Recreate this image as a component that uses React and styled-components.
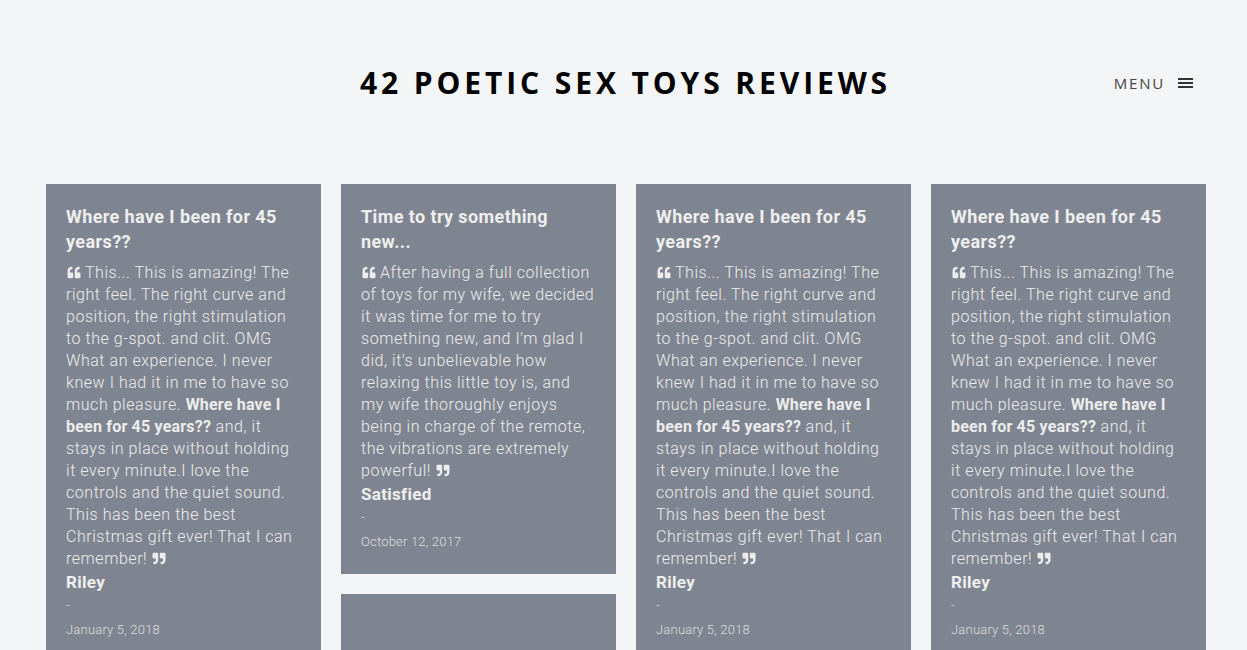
import React from 'react'
import styled, { createGlobalStyle } from 'styled-components'
import { FaQuoteLeft, FaQuoteRight } from 'react-icons/fa'

const riley = {
  title: 'Where have I been for 45 years??',
  before: 'This... This is amazing! The right feel. The right curve and position, the right stimulation to the g-spot. and clit. OMG What an experience. I never knew I had it in me to have so much pleasure. ',
  strong: 'Where have I been for 45 years??',
  after: ' and, it stays in place without holding it every minute.I love the controls and the quiet sound. This has been the best Christmas gift ever! That I can remember!',
  author: 'Riley',
  date: 'January 5, 2018'
}

const reviews = [
  [riley],
  [
    {
      title: 'Time to try something new...',
      before: "After having a full collection of toys for my wife, we decided it was time for me to try something new, and I'm glad I did, it's unbelievable how relaxing this little toy is, and my wife thoroughly enjoys being in charge of the remote, the vibrations are extremely powerful!",
      author: 'Satisfied',
      date: 'October 12, 2017'
    },
    { empty: true }
  ],
  [riley],
  [riley]
]

export default function App() {
  return (
    <>
      <GlobalStyle />
      <Page>
        <Header>
          <SiteTitle>42 Poetic Sex Toys Reviews</SiteTitle>
          <MenuToggle>
            <span>Menu</span>
            <svg width="15" height="12" viewBox="0 0 15 12">
              <rect x="0" y="1" width="15" height="2" fill="#333" />
              <rect x="0" y="5" width="15" height="2" fill="#333" />
              <rect x="0" y="9" width="15" height="2" fill="#333" />
            </svg>
          </MenuToggle>
        </Header>

        <Grid>
          {reviews.map((col, i) => (
            <Column key={i}>
              {col.map((r, j) =>
                r.empty ? (
                  <Card key={j} $empty />
                ) : (
                  <Card key={j}>
                    <CardTitle>{r.title}</CardTitle>
                    <Quote>
                      <FaQuoteLeft className="q" />
                      {r.before}
                      {r.strong && <strong>{r.strong}</strong>}
                      {r.after}
                      <FaQuoteRight className="q right" />
                    </Quote>
                    <Author>{r.author}</Author>
                    <Dash>-</Dash>
                    <DateLine>{r.date}</DateLine>
                  </Card>
                )
              )}
            </Column>
          ))}
        </Grid>
      </Page>
    </>
  )
}

// STYLES
const GlobalStyle = createGlobalStyle`
  html, body {
    margin: 0;
    padding: 0;
    background: #f4f5f7;
  }
  body {
    font-family: Roboto, "Liberation Sans", sans-serif;
    overflow: hidden;
  }
`

const Page = styled.div`
  height: 650px;
  overflow: hidden;
`

const Header = styled.header`
  position: relative;
  height: 184px;
  display: flex;
  justify-content: center;
  padding-top: 64px;
  box-sizing: border-box;
`

const SiteTitle = styled.h1`
  margin: 0;
  font-family: "Open Sans", sans-serif;
  font-weight: 700;
  font-size: 30px;
  line-height: 38px;
  letter-spacing: 3.9px;
  text-transform: uppercase;
  color: #000;
  height: 38px;
  padding-left: 4px;
`

const MenuToggle = styled.div`
  position: absolute;
  right: 54px;
  top: 73px;
  display: flex;
  align-items: center;
  gap: 13px;
  font-family: "Open Sans", sans-serif;
  font-size: 15px;
  letter-spacing: 1.8px;
  text-transform: uppercase;
  color: #444;

  svg { display: block; }
`

const Grid = styled.div`
  display: flex;
  gap: 20px;
  padding-left: 46px;
  align-items: flex-start;
`

const Column = styled.div`
  width: 275px;
  display: flex;
  flex-direction: column;
  gap: 20px;
`

const Card = styled.article`
  background: #7f8590;
  padding: 20px 20px 20px;
  box-sizing: border-box;
  color: #ebebeb;
  min-height: ${p => (p.$empty ? '80px' : 'auto')};
`

const CardTitle = styled.h2`
  margin: 0 0 8px;
  font-family: Roboto, sans-serif;
  font-weight: 700;
  font-size: 18px;
  line-height: 25px;
  letter-spacing: 0.4px;
  color: #eeeeee;
`

const Quote = styled.p`
  margin: 0;
  font-family: Roboto, sans-serif;
  font-weight: 300;
  font-size: 16px;
  line-height: 22px;
  letter-spacing: 0.55px;
  color: #ececec;

  strong {
    font-weight: 700;
    letter-spacing: 0.2px;
  }

  .q {
    width: 16px;
    height: 13px;
    margin-right: 3px;
    vertical-align: -1px;
  }
  .q.right {
    margin-right: 0;
    margin-left: 4px;
  }
`

const Author = styled.div`
  font-family: Roboto, sans-serif;
  font-weight: 700;
  font-size: 17px;
  line-height: 24px;
  letter-spacing: 0.3px;
  color: #eeeeee;
`

const Dash = styled.div`
  font-size: 13px;
  font-weight: 300;
  line-height: 24px;
  color: #d8d8d8;
`

const DateLine = styled.div`
  font-size: 13px;
  font-weight: 300;
  line-height: 24px;
  letter-spacing: 0.2px;
  color: #dddddd;
`
